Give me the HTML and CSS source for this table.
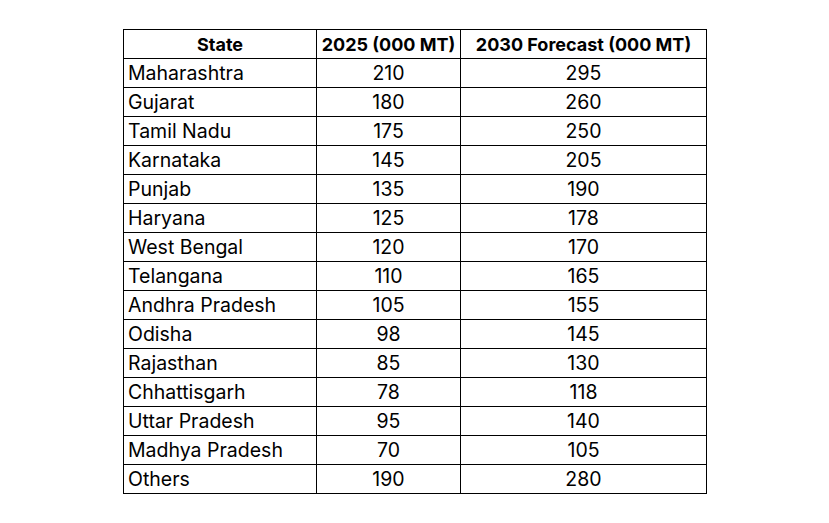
FILE: index.html
```html
<!DOCTYPE html>
<html>
<head>
<meta charset="utf-8">
<link rel="stylesheet" href="styles.css">
</head>
<body>
<table class="data">
  <colgroup>
    <col class="c1"><col class="c2"><col class="c3">
  </colgroup>
  <thead>
    <tr><th>State</th><th>2025 (000 MT)</th><th>2030 Forecast (000 MT)</th></tr>
  </thead>
  <tbody>
    <tr><td>Maharashtra</td><td class="num">210</td><td class="num">295</td></tr>
    <tr><td>Gujarat</td><td class="num">180</td><td class="num">260</td></tr>
    <tr><td>Tamil Nadu</td><td class="num">175</td><td class="num">250</td></tr>
    <tr><td>Karnataka</td><td class="num">145</td><td class="num">205</td></tr>
    <tr><td>Punjab</td><td class="num">135</td><td class="num">190</td></tr>
    <tr><td>Haryana</td><td class="num">125</td><td class="num">178</td></tr>
    <tr><td>West Bengal</td><td class="num">120</td><td class="num">170</td></tr>
    <tr><td>Telangana</td><td class="num">110</td><td class="num">165</td></tr>
    <tr><td>Andhra Pradesh</td><td class="num">105</td><td class="num">155</td></tr>
    <tr><td>Odisha</td><td class="num">98</td><td class="num">145</td></tr>
    <tr><td>Rajasthan</td><td class="num">85</td><td class="num">130</td></tr>
    <tr><td>Chhattisgarh</td><td class="num">78</td><td class="num">118</td></tr>
    <tr><td>Uttar Pradesh</td><td class="num">95</td><td class="num">140</td></tr>
    <tr><td>Madhya Pradesh</td><td class="num">70</td><td class="num">105</td></tr>
    <tr><td>Others</td><td class="num">190</td><td class="num">280</td></tr>
  </tbody>
</table>
</body>
</html>
```
FILE: styles.css
```css
html, body {
  margin: 0;
  padding: 0;
  background: #ffffff;
}
body {
  padding: 29px 0 0 123px;
  font-family: Inter, "Noto Sans", sans-serif;
  color: #000;
}
.data {
  border-collapse: collapse;
  table-layout: fixed;
  width: 583px;
  font-size: 19.5px;
}
.c1 { width: 193px; }
.c2 { width: 144px; }
.c3 { width: 246px; }
.data th, .data td {
  border: 1px solid #000;
  height: 27px;
  padding: 1px 4px 0;
  line-height: 27px;
  white-space: nowrap;
  overflow: hidden;
}
.data th {
  font-size: 18px;
  font-weight: 700;
  text-align: center;
  padding-left: 1px;
  padding-right: 1px;
}
.data td { text-align: left; }
.data td.num { text-align: center; }
```
